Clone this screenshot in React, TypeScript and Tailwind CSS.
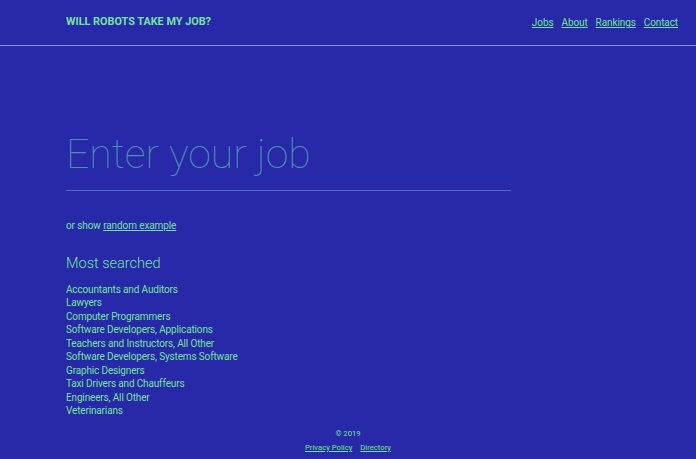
import React from "react";

const jobs = [
  "Accountants and Auditors",
  "Lawyers",
  "Computer Programmers",
  "Software Developers, Applications",
  "Teachers and Instructors, All Other",
  "Software Developers, Systems Software",
  "Graphic Designers",
  "Taxi Drivers and Chauffeurs",
  "Engineers, All Other",
  "Veterinarians",
];

function App() {
  return (
    <div className="min-h-[459px] w-full bg-[#2729a8] text-[#74e39a] font-['Roboto',sans-serif]">
      <header className="flex h-[46px] items-center justify-between border-b border-[#8a8ee0] pl-[66px] pr-[18px]">
        <div className="text-[10.85px] font-bold uppercase">Will robots take my job?</div>
        <nav className="flex gap-[8px] text-[10px] tracking-[-0.1px]">
          <a href="#" className="underline">Jobs</a>
          <a href="#" className="underline">About</a>
          <a href="#" className="underline">Rankings</a>
          <a href="#" className="underline">Contact</a>
        </nav>
      </header>

      <main className="pl-[66px] pt-[83px]">
        <div className="w-[445px] border-b border-[#4f6fc0] pb-[11px]">
          <input
            placeholder="Enter your job"
            className="w-full bg-transparent text-[41px] font-thin leading-[50px] text-[#5a9ab5] placeholder:text-[#4c8fb3] outline-none"
          />
        </div>
        <p className="mt-[27px] text-[10px] leading-[15px] tracking-[-0.1px]">
          or show <a href="#" className="underline">random example</a>
        </p>

        <h3 className="mt-[20px] text-[14.5px] font-light leading-[21px]">Most searched</h3>
        <ul className="mt-[9px] text-[10px] leading-[13.45px] tracking-[-0.15px]">
          {jobs.map((job) => (
            <li key={job}>
              <a href="#">{job}</a>
            </li>
          ))}
        </ul>
      </main>

      <footer className="mt-[10px] flex flex-col items-center pb-[6px] text-[7.7px] leading-[12px]">
        <p>© 2019</p>
        <div className="mt-[2px] flex gap-[8px]">
          <a href="#" className="underline">Privacy Policy</a>
          <a href="#" className="underline">Directory</a>
        </div>
      </footer>
    </div>
  );
}

export default App;
